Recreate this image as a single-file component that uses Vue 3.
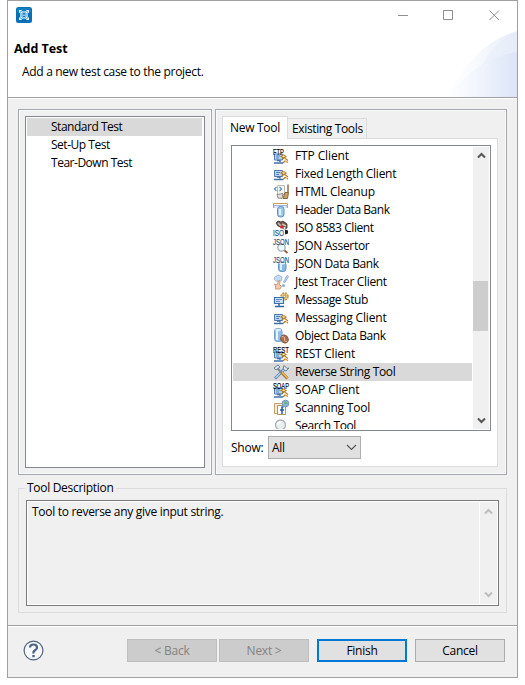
<script setup>
const tests = ['Standard Test', 'Set-Up Test', 'Tear-Down Test']
const tools = [
  { name: 'FTP Client', tag: 'FTP', kind: 'client', track: -0.12 },
  { name: 'Fixed Length Client', kind: 'client', track: -0.27 },
  { name: 'HTML Cleanup', kind: 'html', track: -0.14 },
  { name: 'Header Data Bank', kind: 'header', track: -0.46 },
  { name: 'ISO 8583 Client', kind: 'iso', track: -0.42 },
  { name: 'JSON Assertor', tag: 'JSON', kind: 'assert', track: -0.3 },
  { name: 'JSON Data Bank', tag: 'JSON', kind: 'bank', track: -0.36 },
  { name: 'Jtest Tracer Client', kind: 'tracer', track: -0.33 },
  { name: 'Message Stub', kind: 'stub', track: -0.38 },
  { name: 'Messaging Client', kind: 'client', track: -0.16 },
  { name: 'Object Data Bank', kind: 'object', track: -0.4 },
  { name: 'REST Client', tag: 'REST', kind: 'client', track: -0.22 },
  { name: 'Reverse String Tool', kind: 'tools', track: -0.36 },
  { name: 'SOAP Client', tag: 'SOAP', kind: 'client', track: -0.13 },
  { name: 'Scanning Tool', kind: 'scan', track: -0.22 },
  { name: 'Search Tool', kind: 'search', track: -0.38 }
]
const selectedTool = 'Reverse String Tool'
</script>

<template>
  <div class="window">
    <header class="header">
      <svg class="wave" width="70" height="66" viewBox="0 0 70 66">
        <defs>
          <linearGradient id="w1"><stop offset="0" stop-color="#fff" /><stop offset=".4" stop-color="#f8fafd" /><stop offset="1" stop-color="#e7edf9" /></linearGradient>
          <linearGradient id="w2"><stop offset="0" stop-color="#fff" /><stop offset=".5" stop-color="#eef3fc" /><stop offset="1" stop-color="#dce4f6" /></linearGradient>
        </defs>
        <path d="M0 66Q27 12 70 0V66Z" fill="url(#w1)" />
        <path d="M33 37Q49 8 70 1V28Z" fill="#e4ebf9" opacity=".4" />
        <path d="M1 66Q30 27 70 21V66Z" fill="url(#w2)" />
      </svg>
      <div class="titlebar">
        <svg width="16" height="16" viewBox="0 0 16 16">
          <rect width="16" height="16" rx="2.5" fill="#0870b4" />
          <path d="M1 1h14v5H1z" fill="#279ad8" opacity=".35" />
          <path d="M3 3h2l1 1h4l1-1h2v2l-1 1v4l1 1v2h-2l-1-1H6l-1 1H3v-2l1-1V6L3 5z" fill="#8cc8ea" />
          <path d="M3.500 5.500v-2h2M10.500 3.500h2v2M12.500 10.500v2h-2M5.500 12.500h-2v-2M5 5l2 2M11 5L9 7M5 11l2-2M11 11L9 9" fill="none" stroke="#f2fbff" />
          <path d="M6.500 6h3v1.500h-3zM6.500 9h3v1h-3z" fill="#1478b6" />
        </svg>
        <svg class="controls" width="102" height="11" viewBox="0 0 102 11" fill="none" stroke="#8f8f8f">
          <path d="M0 5.500h10M45.500 .5h9v9h-9zM91.500 .5l9.500 9.500M101 .5l-9.500 9.500" />
        </svg>
      </div>
      <h1>Add Test</h1>
      <p>Add a new test case to the project.</p>
    </header>

    <main class="body">
      <div class="panels">
        <section class="panel left">
          <ul class="tests">
            <li v-for="(t, i) in tests" :key="t" :class="{ selected: i === 0 }">{{ t }}</li>
          </ul>
        </section>

        <section class="panel right">
          <nav class="tabs">
            <div class="tab active">New Tool</div>
            <div class="tab">Existing Tools</div>
          </nav>
          <div class="pane">
            <div class="toolbox">
              <ul class="tools">
                <li v-for="t in tools" :key="t.name" :class="{ selected: t.name === selectedTool }">
                  <svg width="17" height="18" viewBox="0 0 17 18">
                    <g v-if="t.kind === 'client'" :transform="t.tag ? 'translate(0 1.500)' : ''">
                      <path d="M1.500 5.500h8v6h-8z" fill="#b9d8f5" stroke="#5279ae" />
                      <path d="M3 7.500h4M3 9.500h3" stroke="#4c82bc" />
                      <path d="M4 12h3v1.500M1 14.500h9" fill="none" stroke="#3f6fae" stroke-width="1.400" />
                      <path d="M8 8l2.500-1.500L13 8l-2 1.500zM8.500 11l3-1.500 3.500 2.500M10 14.500l2-2 3 1.500" fill="none" stroke="#b47a22" stroke-width="1.100" />
                      <path d="M9 8l1.500-.7L12 8M10 11l1.500-.5 2 1.500M12 13.500h2" fill="none" stroke="#ffdc86" stroke-width=".8" />
                    </g>
                    <g v-else-if="t.kind === 'html'">
                      <path d="M4.500 2.500h7v9h-7z" fill="#f7f7f2" stroke="#bcbbb2" />
                      <path d="M3.500 4L1.500 6l2 2M6.500 4L8.500 6l-2 2" fill="none" stroke="#5c8eb8" stroke-width="1.200" />
                      <path d="M15 1.500v8" stroke="#8d6b3e" stroke-width="1.500" /><path d="M12 9.500h3.500l-1 6H10z" fill="#c6a066" stroke="#8a673a" />
                      <path d="M4 11.500l6-1-1 5-4-.5z" fill="#e4dfd6" stroke="#8f8b84" />
                    </g>
                    <g v-else-if="t.kind === 'header'">
                      <path d="M.5 7V2.500h14V7" fill="#fff9e9" stroke="#c3a05e" />
                      <path d="M1 7V4.500h13V7" fill="#e6f0fb" stroke="#9db7d8" />
                      <rect x="4.500" y="5.500" width="6.500" height="10.500" rx="2.800" fill="#9fc7ef" stroke="#5c8ec6" />
                      <path d="M7 8v6" stroke="#e4f3ff" stroke-width="2" />
                    </g>
                    <g v-else-if="t.kind === 'iso'">
                      <path d="M3 4l2-2 3 1 2-1 4 3v4l-3 1-3-2-3-1z" fill="#6b5751" stroke="#3a3030" stroke-width=".8" />
                      <path d="M5 4l3 3M9 5l4 2" stroke="#e2baa2" stroke-width="1.600" />
                      <circle cx="8.500" cy="8" r="1.500" fill="#d12c28" /><circle cx="11.500" cy="9" r="1" fill="#f7f7f7" />
                      <path d="M12 10.500l3 1v3l-3 1z" fill="#222" />
                      <text class="tag blue" x="0" y="17" textLength="11" lengthAdjust="spacingAndGlyphs">ISO</text>
                    </g>
                    <g v-else-if="t.kind === 'assert'">
                      <path d="M11 13l3.500 3" stroke="#966445" stroke-width="2" />
                      <circle cx="8.500" cy="10.500" r="3.700" fill="#eef8ff" stroke="#9aa7b1" stroke-width="1.200" />
                    </g>
                    <g v-else-if="t.kind === 'bank'">
                      <rect x="5.500" y="7" width="7.500" height="9.500" rx="2.800" fill="#89b8e8" stroke="#5b91cb" />
                      <path d="M8 9v6" stroke="#dceeff" stroke-width="2" /><ellipse cx="9.200" cy="8.200" rx="3" ry="1.200" fill="#e4f3ff" />
                    </g>
                    <g v-else-if="t.kind === 'tracer'">
                      <path d="M1.500 4l4-2 3.500 2-.5 3.500-5 1-2-2z" fill="#c5d9ef" stroke="#a3bddb" />
                      <path d="M10.500 9L14 2.500l1.500 1-3.500 6z" fill="#c9def3" stroke="#8eb0d8" />
                      <circle cx="10.500" cy="12.500" r="1.600" fill="#8fb3da" />
                      <path d="M2.500 16v-3l-1-2 2.500 1 2-5 1 1-.5 4 2 1-1.500 3z" fill="#f6cbab" stroke="#d59a78" />
                    </g>
                    <g v-else-if="t.kind === 'stub'">
                      <circle cx="11.500" cy="5.500" r="3.300" fill="#f4d48c" stroke="#c09a52" stroke-width="2" stroke-dasharray="1.800 .8" />
                      <circle cx="11.500" cy="5.500" r="1.200" fill="#fff" stroke="#b18539" />
                      <path d="M1.500 6.500h9v6h-9z" fill="#cfe4fa" stroke="#3d6fae" stroke-width="1.200" />
                      <path d="M3 8.500h6M3 10.500h4" stroke="#5b8cc2" /><path d="M6 13v2M2 15.500h9" stroke="#3566a4" stroke-width="1.500" />
                    </g>
                    <g v-else-if="t.kind === 'object'">
                      <rect x="1.500" y="1.500" width="7.500" height="13" rx="2.800" fill="#8ebfeb" stroke="#73a0cf" />
                      <path d="M4 4v9" stroke="#e6f5ff" stroke-width="2" /><ellipse cx="5.200" cy="3" rx="3" ry="1.300" fill="#d9edff" />
                      <ellipse cx="11.500" cy="12" rx="3.500" ry="4.200" transform="rotate(-35 11.500 12)" fill="#ad7050" stroke="#80503a" />
                      <path d="M8.500 9.500q4 0 3 2.500t3 3" fill="none" stroke="#e0b69a" />
                    </g>
                    <g v-else-if="t.kind === 'tools'">
                      <path d="M2 15.500L12.500 5" stroke="#517da9" stroke-width="2.600" /><path d="M2.500 15L12 5.500" stroke="#b9daf4" stroke-width="1.200" />
                      <path d="M11 2.500L10 6l3 2 3-3-2 .5-1.500-1.500z" fill="#dce9f5" stroke="#667f9a" />
                      <path d="M4 5l5 5" stroke="#7a858f" stroke-width="2" />
                      <path d="M1 5l4-3 2 2-4 3z" fill="#dce7ef" stroke="#657f93" />
                      <path d="M8.500 9.500l6 6" stroke="#a66e20" stroke-width="3" /><path d="M9 9.500l5.500 5.500" stroke="#f2be58" stroke-width="1.400" />
                    </g>
                    <g v-else-if="t.kind === 'scan'">
                      <path d="M1.500 4.500h8v10h-8z" fill="#f8ebd1" stroke="#c3a26b" /><path d="M4.500 6.500h8v9h-8z" fill="#fff" stroke="#b49560" />
                      <path d="M10.500 8H9v7M7 11h4" fill="none" stroke="#245b9e" stroke-width="1.500" />
                      <circle cx="12.500" cy="4.500" r="3.300" fill="#89bce6" stroke="#6f97bd" /><path d="M11 3l2-1 1 2-2 2zM13.500 5l1.500-1-.5 2z" fill="#72ad62" />
                    </g>
                    <g v-else>
                      <path d="M10 11.500l3.500 3.500" stroke="#9d7654" stroke-width="2" /><circle cx="7.500" cy="8" r="5" fill="#e9eef1" stroke="#aab1b5" stroke-width="1.300" /><path d="M4.800 8q0-3 3-3" fill="none" stroke="#fff" stroke-width="1.500" />
                    </g>
                    <text v-if="t.tag" class="tag" :class="{ blue: t.tag === 'JSON' }" x="0" y="7.500" :textLength="t.tag === 'FTP' ? 11 : 16" lengthAdjust="spacingAndGlyphs">{{ t.tag }}</text>
                  </svg>
                  <span :style="{ letterSpacing: t.track + 'px' }">{{ t.name }}</span>
                </li>
              </ul>
              <div class="scroll">
                <svg width="9" height="7" viewBox="0 0 9 7"><path d="M1 5.500l3.500-3.500L8 5.500" /></svg>
                <div class="track"><div class="thumb"></div></div>
                <svg width="9" height="7" viewBox="0 0 9 7"><path d="M1 1.500L4.500 5 8 1.500" /></svg>
              </div>
            </div>
            <div class="show">
              <span class="label">Show:</span>
              <div class="select"><span>All</span><svg width="11" height="7" viewBox="0 0 11 7"><path d="M1 1l4.500 4.500L10 1" fill="none" stroke="#555" stroke-width="1.100" /></svg></div>
            </div>
          </div>
        </section>
      </div>

      <fieldset class="group">
        <legend>Tool Description</legend>
        <div class="description">
          <p>Tool to reverse any give input string.</p>
          <div class="scroll faded">
            <svg width="9" height="7" viewBox="0 0 9 7"><path d="M1 5.500l3.500-3.500L8 5.500" /></svg>
            <svg width="9" height="7" viewBox="0 0 9 7"><path d="M1 1.500L4.500 5 8 1.500" /></svg>
          </div>
        </div>
      </fieldset>
    </main>

    <footer class="footer">
      <svg width="21" height="21" viewBox="0 0 21 21" fill="none">
        <circle cx="10.500" cy="10.500" r="9.400" fill="#f7f8fa" stroke="#506583" stroke-width="1.200" />
        <path d="M7 7.500Q7 4.500 10.500 4.500T14 7.500Q14 9 12 10.200T10.500 13.500" stroke="#4b6288" stroke-width="2.200" /><path d="M9.300 15h2.400v2.200H9.300z" fill="#4b6288" />
      </svg>
      <div class="buttons">
        <button class="disabled">&lt; Back</button>
        <button class="disabled">Next &gt;</button>
        <button class="primary">Finish</button>
        <button class="cancel">Cancel</button>
      </div>
    </footer>
  </div>
</template>

<style>
body { background: #fff; }
</style>

<style scoped>
* { box-sizing: border-box; margin: 0; padding: 0; }
svg { display: block; flex: none; overflow: visible; }
ul { list-style: none; }
.window { width: 511px; height: 678px; margin-left: 7px; border: 1px solid #a0a0a0; background: #f0f0f0; color: #000; font: 12px/18px "Open Sans", "Noto Sans", sans-serif; letter-spacing: -0.25px; white-space: nowrap; display: flex; flex-direction: column; }
.header { position: relative; height: 97px; background: #fff; border-bottom: 1px solid #a0a0a0; flex: none; }
.wave { position: absolute; right: 0; bottom: 0; }
.titlebar { display: flex; justify-content: space-between; padding: 6px 17px 0 8px; }
.controls { margin-top: 3px; }
h1 { font-size: 12.5px; line-height: 18px; font-weight: 700; letter-spacing: -0.05px; padding: 17px 0 0 6px; }
.header p { padding: 5px 0 0 14px; letter-spacing: -0.31px; }
.body { border-top: 1px solid #fff; height: 527px; padding: 10px 10px 0; flex: none; }
.panels { display: flex; gap: 3px; height: 366px; }
.panel { border: 1px solid #a5a8ae; box-shadow: inset 0 0 0 1px #fafafa; padding: 6px; }
.left { width: 194px; }
.right { width: 292px; display: flex; flex-direction: column; }
.tests { width: 180px; height: 352px; background: #fff; border: 1px solid #828790; padding: 1px; }
.tests li { height: 18px; padding-left: 24px; letter-spacing: -0.48px; }
.selected { background: #d9d9d9; }
.tests .selected { margin-right: 1px; }
.tabs { display: flex; align-items: flex-end; height: 22px; }
.tab { height: 20px; width: 79px; border: 1px solid #dcdcdc; border-left: 0; border-bottom: 0; padding-left: 4px; line-height: 20px; letter-spacing: -0.36px; }
.tab.active { background: #fff; height: 23px; width: 66px; margin-bottom: -1px; border-left: 1px solid #dcdcdc; position: relative; line-height: 21px; padding-left: 7px; letter-spacing: -0.3px; }
.pane { width: 276px; height: 329px; background: #fff; border: 1px solid #dcdcdc; padding: 6px 6px 0 8px; }
.toolbox { width: 260px; height: 286px; border: 1px solid #828790; padding: 1px; display: flex; justify-content: space-between; }
.tools { width: 239px; height: 282px; overflow: hidden; }
.tools li { display: flex; gap: 5px; height: 18px; padding-left: 40px; }
.tag { font: 400 8.5px/9px "Liberation Sans", sans-serif; letter-spacing: 0; fill: #000; stroke: #000; stroke-width: .15px; }
.blue { fill: #1f4f80; stroke: #1f4f80; }
.scroll { width: 16px; height: 282px; background: #f0f0f0; display: flex; flex-direction: column; align-items: center; justify-content: space-between; padding: 5px 0; }
.scroll path { fill: none; stroke: #555; stroke-width: 2; }
.track { width: 16px; flex: 1; padding-top: 122px; }
.thumb { width: 15px; height: 50px; background: #cdcdcd; }
.show { display: flex; align-items: center; padding-top: 5px; }
.label { width: 37px; }
.select { width: 93px; height: 23px; border: 1px solid #adadad; background: #e1e1e1; display: flex; align-items: center; justify-content: space-between; padding: 0 3px; }
.group { height: 132px; margin-top: 6px; border: 1px solid #dcdcdc; padding: 0 7px; min-width: 0; }
legend { margin-left: -1px; padding: 0 3px 0 2px; height: 14px; line-height: 14px; letter-spacing: -0.3px; }
.description { height: 106px; margin-top: 5px; border: 1px solid #7a7a7a; box-shadow: inset 0 0 0 1px #fff; display: flex; justify-content: space-between; padding: 1px; }
.description p { padding: 1px 0 0 4px; letter-spacing: -0.3px; }
.faded { width: 18px; height: 102px; border-left: 1px solid #fff; padding: 6px 0; }
.faded path { stroke: #bdbdbd; }
.footer { height: 52px; border-top: 1px solid #a0a0a0; box-shadow: inset 0 1px #fff; display: flex; justify-content: space-between; align-items: center; padding: 0 12px 2px 15px; }
.buttons { display: flex; gap: 8px; }
button { width: 90px; height: 23px; border: 1px solid #adadad; background: #e1e1e1; font: inherit; letter-spacing: inherit; color: #000; line-height: 21px; }
.disabled { background: #ccc; border-color: #bfbfbf; color: #838383; }
.disabled + .disabled { margin-left: -6px; }
.primary { border: 2px solid #0078d7; line-height: 19px; }
</style>
